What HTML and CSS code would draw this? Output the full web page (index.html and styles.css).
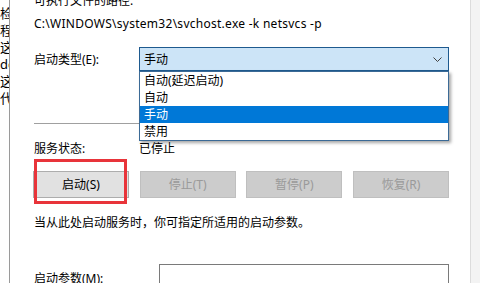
FILE: index.html
```html
<!DOCTYPE html>
<html lang="zh-CN">
<head>
<meta charset="utf-8">
<link rel="stylesheet" href="styles.css">
</head>
<body>
<div class="screen">
  <div class="behind">
    <div>检</div><div>程</div><div>这</div><div>do</div><div>这</div><div>代</div>
  </div>
  <div class="dialog">
    <div class="path-label">可执行文件的路径:</div>
    <div class="path">C:\WINDOWS\system32\svchost.exe -k netsvcs -p</div>
    <div class="combo-row">
      <div class="label">启动类型(E):</div>
      <div class="combo">
        <span class="combo-value">手动</span>
        <svg class="chev" width="9" height="5" viewBox="0 0 9 5"><path d="M0.5 0.5 L4.5 4.5 L8.5 0.5" fill="none" stroke="#404040" stroke-width="1"/></svg>
        <div class="list">
          <div class="item">自动(延迟启动)</div>
          <div class="item">自动</div>
          <div class="item selected">手动</div>
          <div class="item">禁用</div>
        </div>
      </div>
    </div>
    <div class="sep"></div>
    <div class="status-row">
      <div class="label">服务状态:</div>
      <div>已停止</div>
    </div>
    <div class="buttons">
      <div class="btn">启动(S)</div>
      <div class="btn disabled">停止(T)</div>
      <div class="btn disabled">暂停(P)</div>
      <div class="btn disabled">恢复(R)</div>
      <div class="highlight"></div>
    </div>
    <div class="hint">当从此处启动服务时，你可指定所适用的启动参数。</div>
    <div class="param-row">
      <div class="param-label">启动参数(M):</div>
      <div class="input"></div>
    </div>
  </div>
  <div class="scroll"></div>
</div>
</body>
</html>
```

FILE: styles.css
```css
html, body {
  margin: 0;
  padding: 0;
  background: #ffffff;
}
.screen {
  width: 480px;
  height: 283px;
  overflow: hidden;
  display: flex;
  font-family: "Noto Sans", "Noto Sans CJK SC", sans-serif;
  font-size: 12px;
  line-height: 17px;
  color: #000000;
}
.behind {
  width: 9px;
  flex: none;
  overflow: hidden;
  white-space: nowrap;
  border-right: 1px solid #9a9a9a;
  padding-top: 5px;
  font-size: 13px;
}
.dialog {
  flex: 1;
  padding: 0 21px 0 24px;
  min-width: 0;
}
.scroll {
  width: 9px;
  flex: none;
  border-left: 1px solid #dcdcdc;
  background: #f3f3f3;
}
.path-label {
  margin-top: -8px;
}
.path {
  margin-top: 6px;
  letter-spacing: 0.27px;
}
.combo-row {
  display: flex;
  align-items: center;
  margin-top: 15px;
}
.label {
  width: 105px;
  flex: none;
}
.combo {
  position: relative;
  flex: 1;
  height: 24px;
  box-sizing: border-box;
  border: 1px solid #1e5a8f;
  background: #cce4f7;
  display: flex;
  align-items: center;
  padding-left: 4px;
}
.combo-value {
  flex: 1;
}
.chev {
  margin-right: 6px;
}
.list {
  position: absolute;
  left: -1px;
  right: -1px;
  top: 23px;
  border: 1px solid #3b6a96;
  background: #ffffff;
  box-shadow: 2px 2px 3px rgba(0,0,0,0.35);
  z-index: 2;
}
.item {
  height: 17px;
  line-height: 17px;
  padding-left: 4px;
}
.item.selected {
  background: #0078d7;
  color: #ffffff;
}
.sep {
  margin-top: 52px;
  height: 1px;
  background: #a0a0a0;
}
.status-row {
  display: flex;
  margin-top: 16px;
}
.buttons {
  position: relative;
  display: flex;
  justify-content: space-between;
  margin-top: 14px;
  margin-left: -1px;
}
.btn {
  width: 96px;
  height: 27px;
  box-sizing: border-box;
  border: 1px solid #adadad;
  background: #e1e1e1;
  display: flex;
  align-items: center;
  justify-content: center;
}
.btn.disabled {
  border-color: #bfbfbf;
  background: #cccccc;
  color: #9a9a9a;
}
.highlight {
  position: absolute;
  left: 1px;
  top: -12px;
  width: 93px;
  height: 45px;
  box-sizing: border-box;
  border: 3px solid #e8343a;
}
.hint {
  margin-top: 16px;
}
.param-row {
  display: flex;
  margin-top: 33px;
}
.param-label {
  width: 125px;
  flex: none;
  margin-top: 6px;
}
.input {
  flex: 1;
  height: 30px;
  box-sizing: border-box;
  border: 1px solid #7a7a7a;
}
```
